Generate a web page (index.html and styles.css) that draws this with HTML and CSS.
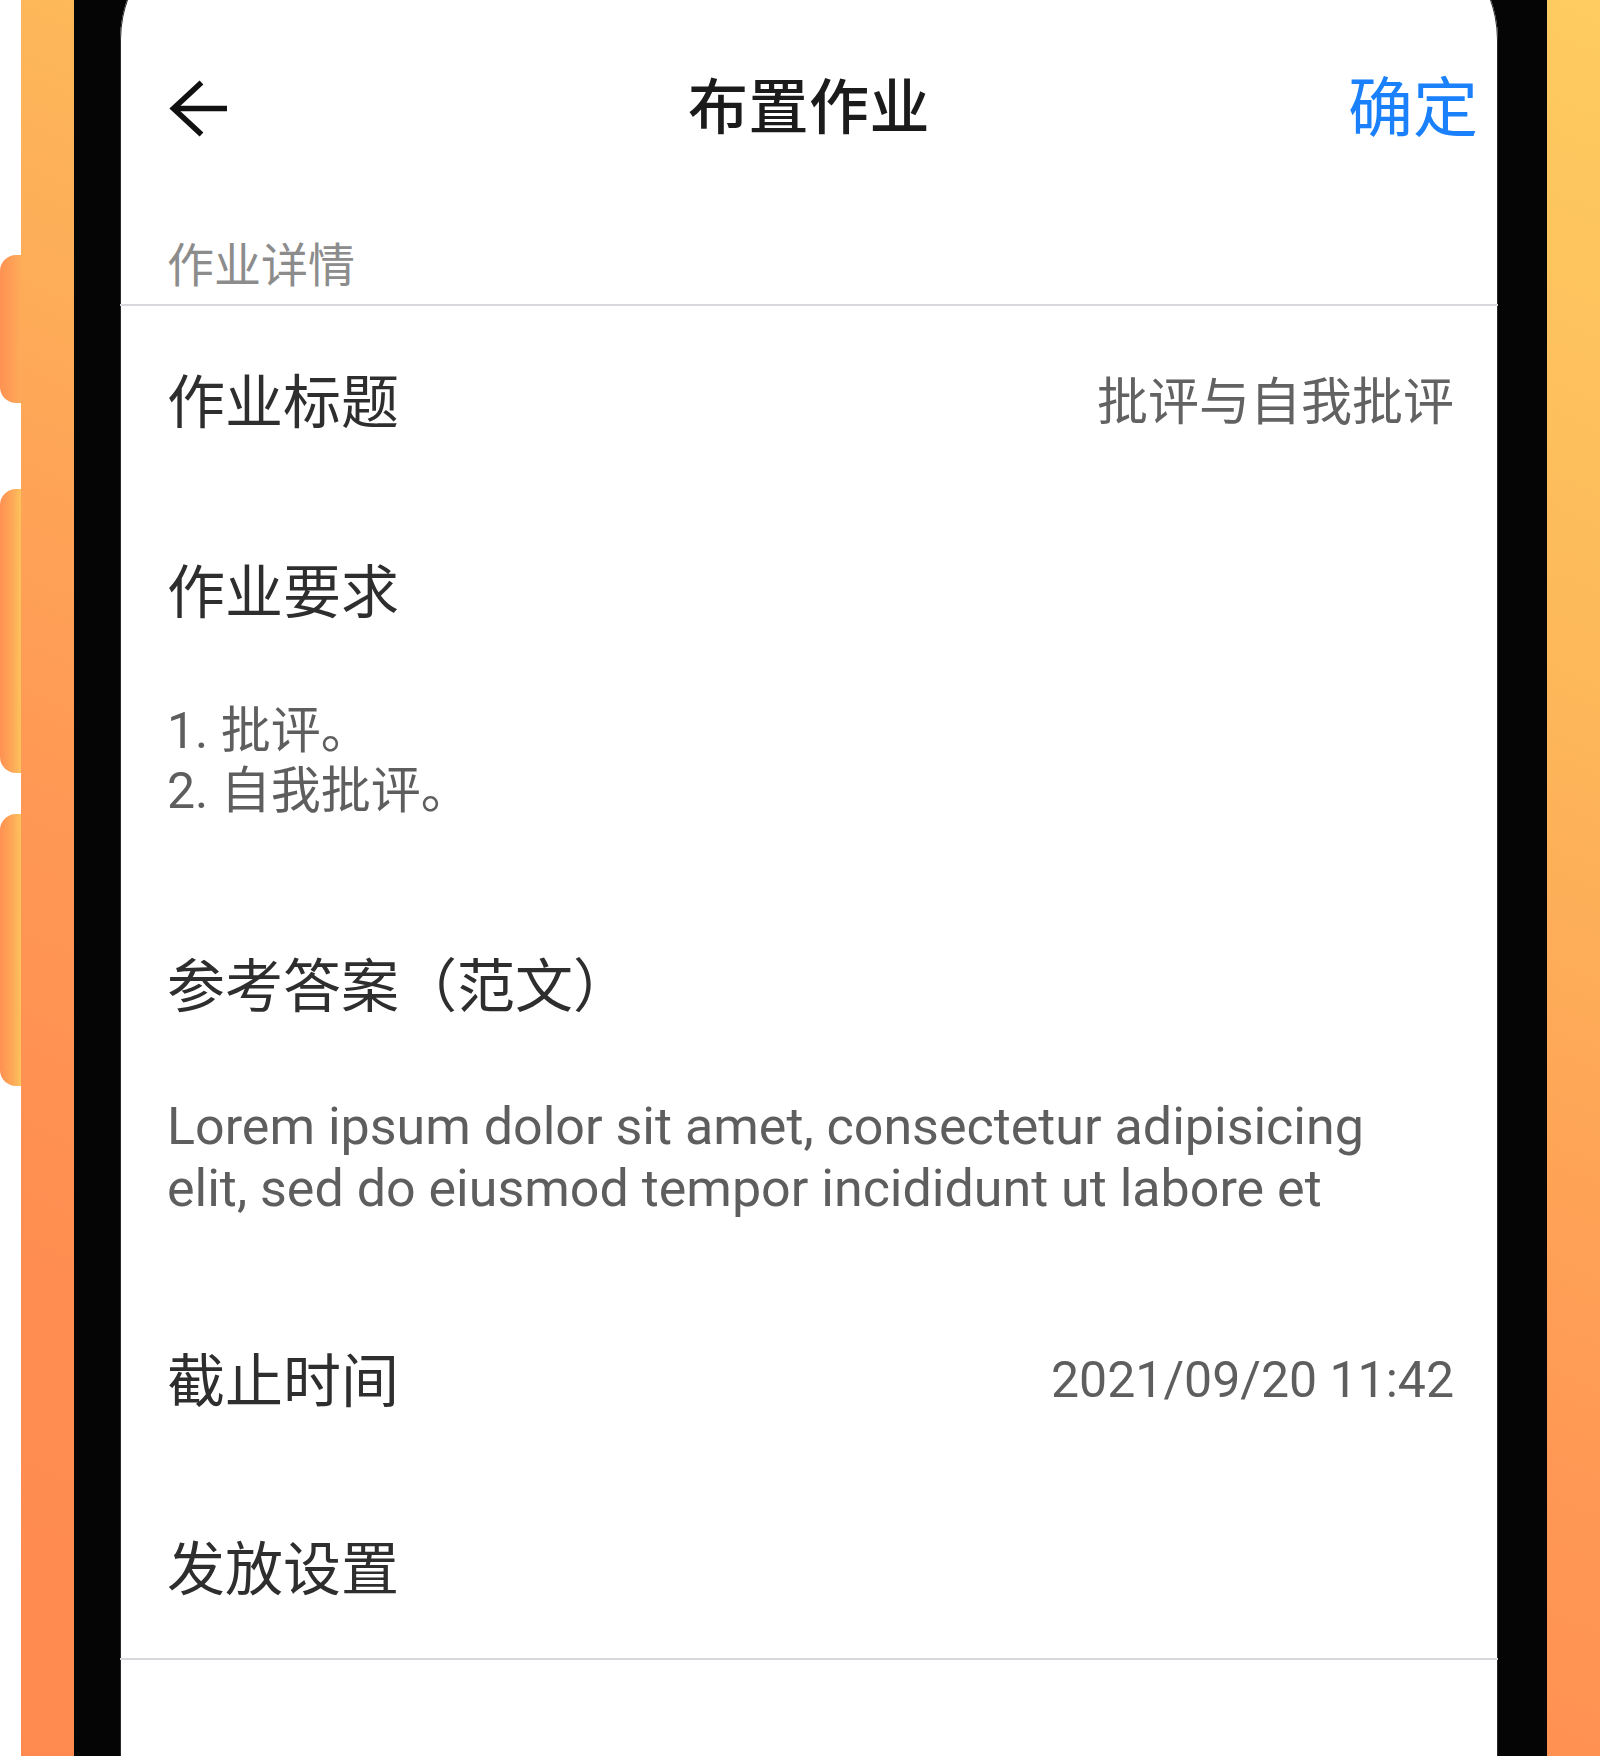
FILE: index.html
```html
<!DOCTYPE html>
<html lang="zh-CN">
<head>
<meta charset="utf-8">
<title>布置作业</title>
<link rel="stylesheet" href="styles.css">
</head>
<body>
<div class="stage">
  <div class="side-keys">
    <span class="key key-1"></span>
    <span class="key key-2"></span>
    <span class="key key-3"></span>
  </div>
  <div class="phone">
    <div class="bezel">
      <div class="screen">
        <header class="navbar">
          <span class="back" aria-label="返回">
            <svg width="60" height="60" viewBox="0 0 60 60" fill="none" stroke="#111" stroke-width="5.6" stroke-linejoin="miter">
              <path d="M32.5 4.5 L4.5 30.5 L32.5 56.5"/>
              <path d="M4.5 30.5 H58"/>
            </svg>
          </span>
          <h1 class="title">布置作业</h1>
          <span class="confirm">确定</span>
        </header>
        <div class="section-head">作业详情</div>
        <div class="list">
          <div class="row">
            <span class="label">作业标题</span>
            <span class="value">批评与自我批评</span>
          </div>
          <div class="block block-req">
            <div class="label">作业要求</div>
            <div class="body-text list-text">1. 批评。<br>2. 自我批评。</div>
          </div>
          <div class="block block-answer">
            <div class="label">参考答案（范文）</div>
            <div class="body-text lorem">Lorem ipsum dolor sit amet, consectetur adipisicing<br>elit, sed do eiusmod tempor incididunt ut labore et</div>
          </div>
          <div class="row">
            <span class="label">截止时间</span>
            <span class="value value-date">2021/09/20 11:42</span>
          </div>
          <div class="row row-last">
            <span class="label">发放设置</span>
          </div>
        </div>
      </div>
    </div>
  </div>
</div>
</body>
</html>
```

FILE: styles.css
```css
html, body {
  margin: 0;
  padding: 0;
  background: #ffffff;
}

.stage {
  width: 1600px;
  height: 1756px;
  overflow: hidden;
  display: flex;
  background: #ffffff;
  font-family: "Noto Sans CJK SC", "Noto Sans", sans-serif;
}

/* hardware keys on the left edge */
.side-keys {
  width: 21px;
  flex: 0 0 21px;
  display: flex;
  flex-direction: column;
  padding-top: 255px;
}
.key {
  display: block;
  width: 21px;
  border-radius: 16px 0 0 16px;
  background: linear-gradient(to right, #ff9052 0%, #fea958 60%, #fdc35c 100%);
}
.key-1 { height: 148px; background: linear-gradient(to right, #ff9152, #fdab59); }
.key-2 { height: 284px; margin-top: 86px; }
.key-3 { height: 272px; margin-top: 41px; }

/* phone body */
.phone {
  flex: 0 0 1579px;
  width: 1579px;
  height: 1756px;
  box-sizing: border-box;
  padding: 0 53px;
  background: linear-gradient(204deg, #fecc60 0%, #fdb85a 28%, #ff9a55 58%, #ff8d51 80%, #ff8a50 100%);
}

.bezel {
  height: 100%;
  box-sizing: border-box;
  background: #050505;
  padding: 0 49px 0 46px;
  overflow: hidden;
}

.screen {
  margin-top: -78px;
  padding-top: 78px;
  min-height: 1900px;
  background: #ffffff;
  border-radius: 118px 118px 0 0;
  box-shadow: inset 1px 0 0 #2a2a2a, inset -1px 0 0 #2a2a2a;
}

/* navigation bar */
.navbar {
  height: 206px;
  display: grid;
  grid-template-columns: 1fr auto 1fr;
  align-items: center;
  padding: 0 20px;
}
.back {
  display: flex;
  width: 60px;
  height: 60px;
  margin: 9px 0 0 29px;
}
.title {
  margin: 0;
  font-size: 60px;
  line-height: 70px;
  font-weight: 500;
  color: #1b1b1b;
  letter-spacing: 0.5px;
}
.confirm {
  justify-self: end;
  font-size: 65px;
  line-height: 70px;
  color: #1a80fb;
}

/* section header */
.section-head {
  height: 100px;
  box-sizing: border-box;
  padding: 28px 0 16px 47px;
  font-size: 47px;
  line-height: 56px;
  color: #8c8c8c;
  border-bottom: 2px solid #d9d9dd;
}

.list {
  border-bottom: 2px solid #d9d9dd;
}

.label {
  font-size: 58px;
  line-height: 70px;
  color: #2e2e2e;
}

.row {
  height: 190px;
  box-sizing: border-box;
  display: flex;
  align-items: center;
  justify-content: space-between;
  padding: 0 44px 6px 47px;
}
.row-last {
  height: 183px;
  padding-bottom: 3px;
}

.value {
  font-size: 51px;
  line-height: 70px;
  color: #626262;
}
.value-date {
  font-family: "Roboto", "Noto Sans CJK SC", sans-serif;
  font-size: 50px;
  color: #5e5e5e;
  padding-top: 5px;
}

.block {
  padding: 0 44px 0 47px;
}
.block-req {
  padding-top: 57px;
}
.block-answer {
  padding-top: 126px;
  padding-bottom: 65px;
}

.body-text {
  font-family: "Roboto", "Noto Sans CJK SC", sans-serif;
  color: #5e5e5e;
}
.list-text {
  margin-top: 78px;
  font-size: 50px;
  line-height: 60px;
}
.lorem {
  margin-top: 79px;
  font-size: 52px;
  line-height: 62px;
}
```
